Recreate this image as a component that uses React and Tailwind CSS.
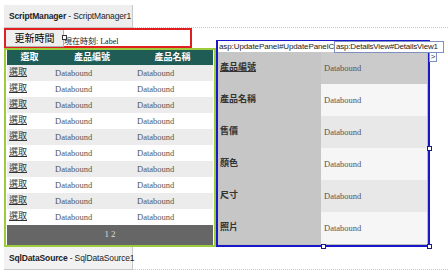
import React from "react";

const serif = "font-['Liberation_Serif','Noto_Sans_CJK_TC',serif]";
const sans = "font-['Liberation_Sans','Noto_Sans_CJK_TC',sans-serif]";

function Handle({ className }) {
  return (
    <div
      className={
        "absolute w-[5px] h-[5px] bg-white border border-[#1a1a8a] " + className
      }
    />
  );
}

export default function App() {
  const rows = Array.from({ length: 10 });
  const fields = ["產品編號", "產品名稱", "售價", "顏色", "尺寸", "照片"];
  return (
    <div className={"w-[448px] h-[277px] bg-white overflow-hidden relative " + serif}>
      {/* ScriptManager */}
      <div className="flex items-end pt-[5px] pl-[4px]">
        <div className={"w-[129px] h-[23px] shrink-0 bg-[#eeeeee] border-r border-b border-[#c8c8c8] flex items-center pl-[5px] whitespace-nowrap text-[8.5px] tracking-[-0.15px] text-[#222] " + sans}>
          <span className="font-bold">ScriptManager</span>
          <span>&nbsp;- ScriptManager1</span>
        </div>
        <div className="flex-1 border-b border-dotted border-[#c8c8c8]" />
      </div>

      <div className="flex items-end pl-[4px]">
        {/* left column */}
        <div className="flex flex-col w-[212px]">
          <div className="relative w-[188px] h-[20px] border-2 border-[#e02020] flex items-end">
            <div className={"absolute left-0 top-0 w-[58px] h-[17px] bg-[#efefef] border-r border-b border-[#b0b0b0] flex items-center justify-center text-[10px] text-black " + sans}>
              更新時間
            </div>
            <div className={"ml-[58px] whitespace-nowrap text-[8px] leading-[9px] text-[#222] " + serif}>
              現在時刻: Label
            </div>
            <Handle className="left-[56px] top-[5px] border-[#333]" />
          </div>
          {/* GridView */}
          <div className="h-[199px] border-2 border-[#9ccc3c] px-px bg-white flex flex-col">
            <div className="grid grid-cols-[45px_80px_1fr] h-[15px] bg-[#1f5c56] text-white font-bold text-[9px] items-center">
              <div className="text-center">選取</div>
              <div className="text-center">產品編號</div>
              <div className="text-center">產品名稱</div>
            </div>
            {rows.map((_, i) => (
              <div
                key={i}
                className={
                  "grid grid-cols-[45px_80px_1fr] h-[16px] items-center text-[8.5px] " +
                  (i % 2 === 0 ? "bg-[#ececec]" : "bg-white")
                }
              >
                <div className="pl-[2px] text-[9px] text-[#333] underline">選取</div>
                <div className="pl-[3px] text-[#555]">Databound</div>
                <div className="pl-[5px] text-[#555]">Databound</div>
              </div>
            ))}
            <div className="h-[20px] bg-[#666666] flex items-center justify-center text-[9px] text-[#dddddd]">
              <span>1</span>
              <span className="ml-[2px]">2</span>
            </div>
          </div>
        </div>

        {/* UpdatePanel */}
        <div className="relative w-[214px] h-[207px] border-2 border-[#1818c8] flex flex-col">
          <div className="h-[10px] flex">
            <div className={"w-[116px] h-[11px] -mt-px bg-white overflow-hidden whitespace-nowrap text-[8px] tracking-[-0.1px] leading-[11px] pl-px text-[#222] " + sans}>
              asp:UpdatePanel#UpdatePanelC
            </div>
          </div>
          <div className="absolute left-[116px] -top-px w-[110px] h-[12px] bg-white border border-[#7f8fbf] overflow-hidden whitespace-nowrap">
            <div className={"text-[8px] tracking-[-0.2px] leading-[10px] pl-px text-[#222] " + sans}>
              asp:DetailsView#DetailsView1
            </div>
          </div>
          <div className={"absolute -right-[9px] top-[10px] w-[8px] h-[10px] bg-white border border-[#7f8fbf] flex items-center justify-center text-[8px] leading-[8px] text-[#333] " + sans}>
            &gt;
          </div>
          {/* DetailsView */}
          <div className="flex-1 flex flex-col border-r border-b border-[#bdbdbd]">
            {fields.map((f, i) => (
              <div key={f} className="flex h-[32px]">
                <div className={"w-[103px] bg-[#c6c6c6] flex items-center pl-[2px] font-bold text-[9px] text-[#333] " + (i === 0 ? "underline" : "")}>
                  {f}
                </div>
                <div
                  className={
                    "flex-1 flex items-center pl-[3px] text-[8.5px] text-[#555] " +
                    (i === 0 ? "bg-[#cbcbcb]" : i % 2 === 1 ? "bg-[#f6f6f6]" : "bg-[#e8e8e8]")
                  }
                >
                  Databound
                </div>
              </div>
            ))}
          </div>
          <Handle className="-right-[4px] top-[104px]" />
          <Handle className="-right-[4px] -bottom-[4px]" />
          <Handle className="left-[103px] -bottom-[4px]" />
        </div>
      </div>

      {/* SqlDataSource */}
      <div className="flex items-end pl-[4px]">
        <div className={"w-[129px] h-[23px] shrink-0 bg-[#f2f2f2] border-r border-b border-[#c8c8c8] flex items-center pl-[5px] whitespace-nowrap text-[8.5px] tracking-[-0.15px] text-[#222] " + sans}>
          <span className="font-bold">SqlDataSource</span>
          <span>&nbsp;- SqlDataSource1</span>
        </div>
        <div className="flex-1 border-b border-dotted border-[#c8c8c8]" />
      </div>
    </div>
  );
}
